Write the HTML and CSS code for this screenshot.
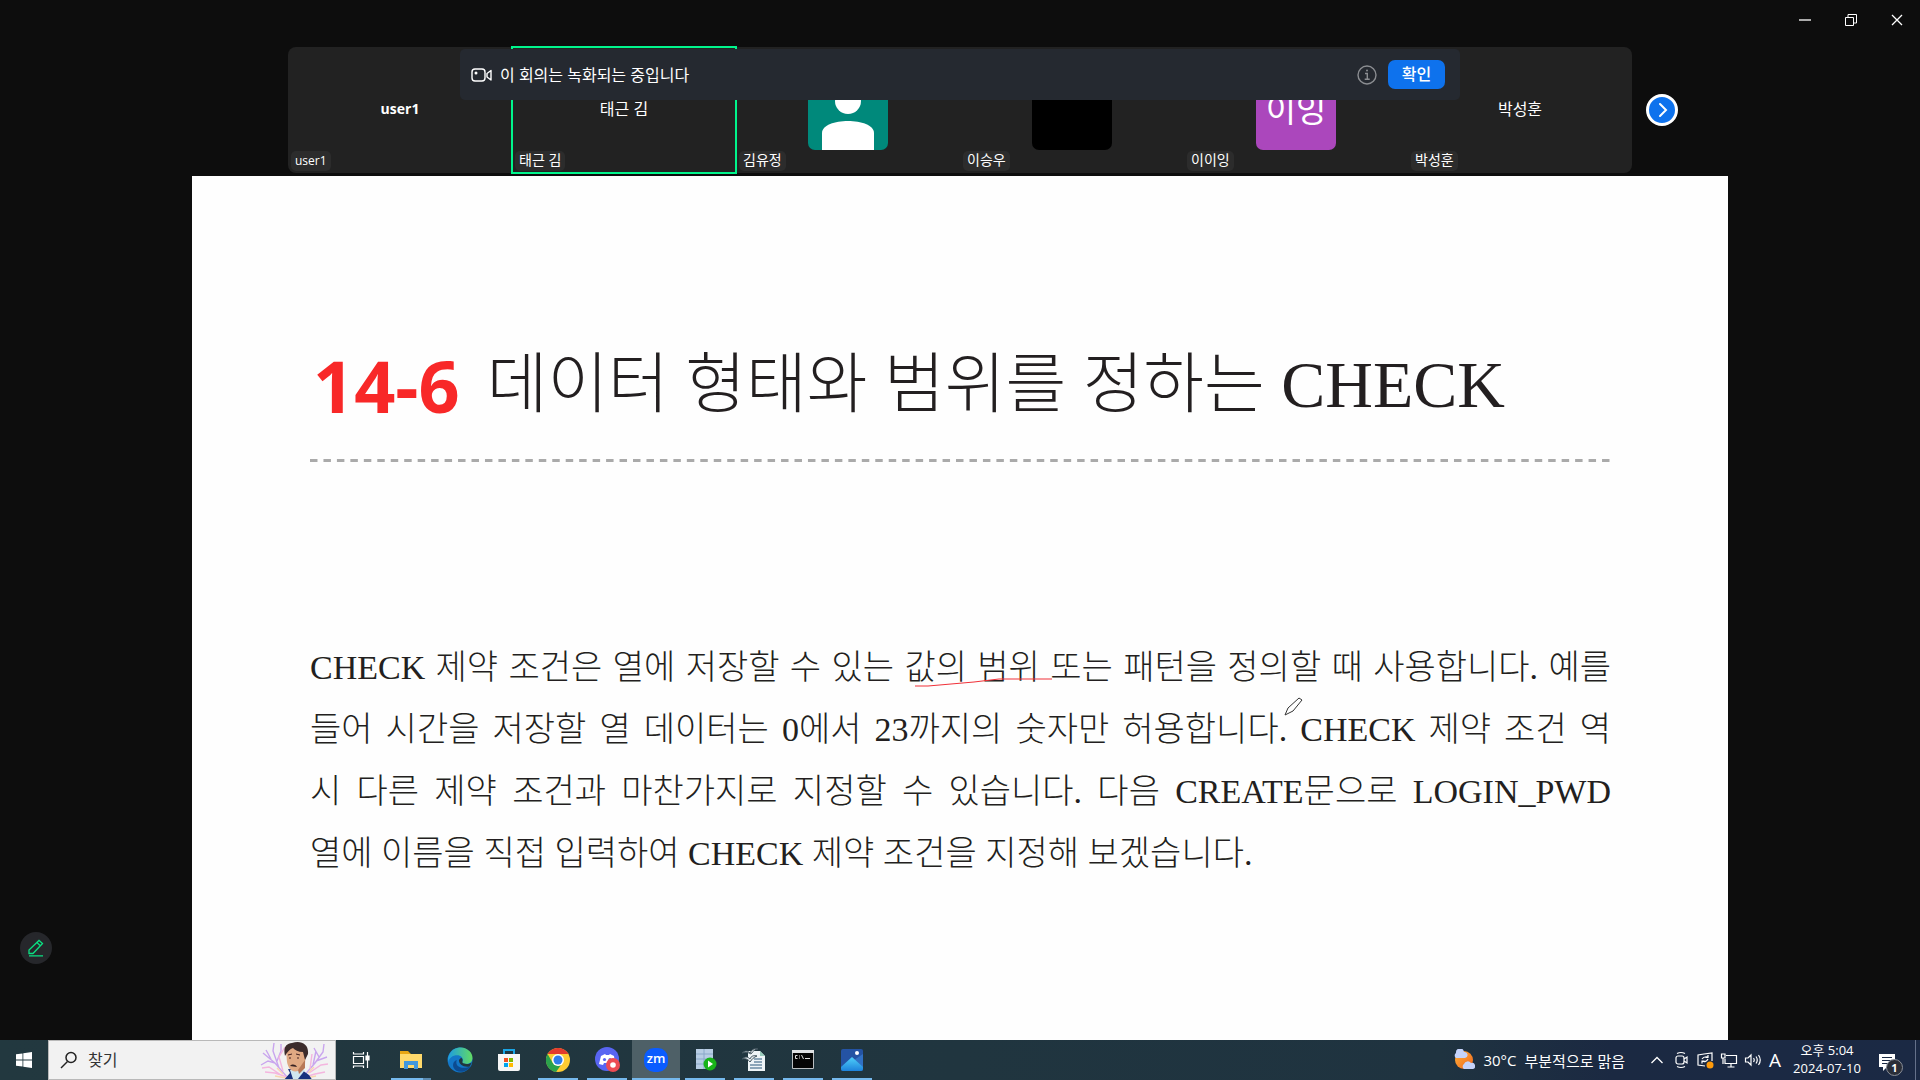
FILE: index.html
```html
<!DOCTYPE html>
<html lang="ko">
<head>
<meta charset="utf-8">
<title>회의</title>
<link rel="stylesheet" href="styles.css">
</head>
<body>
<main class="meeting">
  <header class="titlebar">
    <button class="win-btn" aria-label="최소화"><svg width="14" height="14"><path d="M1 7h12" stroke="#aaa" stroke-width="2"/></svg></button>
    <button class="win-btn" aria-label="이전 크기로"><svg width="14" height="14" fill="none" stroke="#fff"><path d="M1.500 4.500h8v8h-8zM4 4V1.500h8.500V10H10"/></svg></button>
    <button class="win-btn" aria-label="닫기"><svg width="14" height="14"><path d="M2 2l10 10M12 2L2 12" stroke="#fff" stroke-width="1.300"/></svg></button>
  </header>

  <section class="gallery">
    <ul class="tiles">
      <li class="tile"><span class="name latin">user1</span><span class="chip small">user1</span></li>
      <li class="tile speaking"><span class="name">태근 김</span><span class="chip">태근 김</span></li>
      <li class="tile">
        <svg class="avatar" viewBox="0 0 80 80"><rect width="80" height="80" fill="#00897b"/><circle cx="40" cy="31" r="13" fill="#fff"/><path d="M14 80V63C14 55 27 51 40 51s26 4 26 12v17z" fill="#fff"/></svg>
        <span class="chip">김유정</span>
      </li>
      <li class="tile"><span class="avatar black"></span><span class="chip">이승우</span></li>
      <li class="tile"><span class="avatar purple">이잉</span><span class="chip">이이잉</span></li>
      <li class="tile"><span class="name">박성훈</span><span class="chip">박성훈</span></li>
    </ul>
    <button class="next" aria-label="다음"><svg width="26" height="26"><path d="M11 7l6 6-6 6" fill="none" stroke="#fff" stroke-width="2" stroke-linecap="round"/></svg></button>
    <div class="banner">
      <svg width="22" height="16" fill="none" stroke="#fff" stroke-width="1.400"><rect x="1" y="2" width="13" height="12" rx="3"/><path d="M16 6.500l4-3v9.500l-4-3z" stroke-linejoin="round"/><circle cx="5" cy="6" r="1.500" fill="#fff" stroke="none"/></svg>
      <p>이 회의는 녹화되는 중입니다</p>
      <svg class="info" width="20" height="20" fill="none" stroke="#8b8d91" stroke-width="1.400"><circle cx="10" cy="10" r="9"/><path d="M8 8.500h2.300V14M7.700 14.300h5"/><circle cx="10" cy="5.500" r="1" fill="#8b8d91" stroke="none"/></svg>
      <button class="confirm">확인</button>
    </div>
  </section>

  <article class="slide">
    <h1><span class="num">14-6</span><span>데이터 형태와 범위를 정하는 CHECK</span></h1>
    <svg class="rule" viewBox="0 0 1302 3" preserveAspectRatio="none"><path d="M0 1.500H1302" pathLength="2610" stroke="#aaa" stroke-width="3" stroke-dasharray="15 12"/></svg>
    <p class="body">
      <span>CHECK 제약 조건은 열에 저장할 수 있는 값의 범위 또는 패턴을 정의할 때 사용합니다. 예를</span>
      <span>들어 시간을 저장할 열 데이터는 0에서 23까지의 숫자만 허용합니다. CHECK 제약 조건 역</span>
      <span>시 다른 제약 조건과 마찬가지로 지정할 수 있습니다. 다음 CREATE문으로 LOGIN_PWD</span>
      <span>열에 이름을 직접 입력하여 CHECK 제약 조건을 지정해 보겠습니다.</span>
    </p>
    <svg class="ink" viewBox="0 0 1536 864" fill="none">
      <path d="M723 510h13l46-4 25-3h53" stroke="#f03038"/>
      <path d="M1093 539l3-7 11-10 3 2-9 11z" fill="#fff" stroke="#333"/>
    </svg>
  </article>

  <button class="annotate" aria-label="주석"><svg width="18" height="18" fill="none" stroke="#0be082" stroke-width="1.300"><path d="M2 14.500v-3.500L12 1.500l3.500 3L6 14.500zM10 3.500l3.500 3.500M2 16.800h14"/></svg></button>
</main>

<footer class="taskbar">
  <button class="start" aria-label="시작"><svg width="16" height="16" fill="#fff"><path d="M0 2.300l6.500-.9v6.200H0zM7.300 1.300L16 0v7.600H7.300zM0 8.400h6.500v6.200L0 13.700zM7.300 8.400H16V16l-8.700-1.200z"/></svg></button>
  <label class="search">
    <svg width="18" height="18" fill="none" stroke="#222" stroke-width="1.500"><circle cx="11" cy="6.500" r="5"/><path d="M7.500 10.500L1 17"/></svg>
    <input type="text" placeholder="찾기" aria-label="찾기">
    <svg class="tesla" width="72" height="38" viewBox="0 0 72 38" fill="none">
      <g stroke-width="1.400"><path stroke="#c9a5ee" d="M28 36L16 22 4 12M20 27L14 10 15 2M16 22L9 20 2 24M18 20l4-10V3M12 18L7 9M44 36l12-14 8-11 1-8M54 24l3-14M57 20l11-4M60 16l-5-9"/><path stroke="#f4b6df" d="M28 36l-12-4-10-1M22 34L10 26 3 27M24 30L20 16l6-10M46 36l10-3 10-2M50 32l12-8 7-1M51 28l2-15"/><path stroke="#f8d6b0" d="M27 37L16 35M24 33l-6-6M47 37l10-2M49 32l6-6"/></g>
      <path d="M29 28l2 4-7 8h30l-4-6-7-5z" fill="#17307d"/><path d="M31 29l3 9h5l7-9z" fill="#cfe6ee"/>
      <path d="M27 9c0-5 19-6 20 1l-1 13-7 7c-6 2-10-3-11-9z" fill="#e0a983"/><path d="M39 29l7-10v8l-6 6z" fill="#b77858"/>
      <path d="M26 15c-2-9 1-12 7-13 9-3 17 1 16 11l-3 6-2-8c-5 0-8-2-10-4-3 1-6 4-8 8z" fill="#3b2b2b"/>
      <path d="M31 25c2-2 5-2 7 1z" fill="#372323"/><path d="M29 14l4-1M37 13l4 1" stroke="#422"/><path d="M30 17h2M38 17h2" stroke="#422"/>
    </svg>
  </label>
  <nav class="apps">
    <button class="task-view" aria-label="작업 보기"><svg width="18" height="18" fill="none" stroke="#fff" stroke-width="1.200"><path d="M1.500 1v2h10V1M1.500 5.500h10v7h-10zM1.500 17v-2h10v2M15.500 1v16"/><path d="M14 5h3v4h-3z" fill="#fff"/></svg></button>
    <button class="open explorer" aria-label="파일 탐색기"><svg width="24" height="24"><path d="M1 3h8l3 3h11v14H1z" fill="#e8a614"/><path d="M1 6h22v14H1z" fill="#ffd96b"/><path d="M5 21v-8h14v8h-4v-4H9v4z" fill="#4298dc"/></svg></button>
    <button aria-label="Edge"><svg width="26" height="26" viewBox="0 0 24 24"><defs><linearGradient id="e1" x1="0" x2="1"><stop stop-color="#1d9de0"/><stop offset="1" stop-color="#62db64"/></linearGradient></defs><circle cx="12" cy="12" r="11.500" fill="#1377c8"/><path d="M1 10C3 2 9 .4 13 .5c6 .3 11 5 10.500 10-.3 4-4 5.500-8 5-2-.3-2-1-1-2.500 1-3-2-5.500-5-5.500C5 7.500 2 10 1 14z" fill="url(#e1)"/><path d="M9 12c-2 6 4 9 13 6l-2 2c-4 4-12 4-14-1-1-3 0-6 3-7z" fill="#0c4b91"/><path d="M13 10c3 2 0 4 2 5 3 1 6 1 8-1l-2 4c-6 1-10-2-10-6z" fill="#21353e"/></svg></button>
    <button aria-label="Store"><svg width="24" height="24"><path d="M7 7V2h10v5" fill="none" stroke="#1aa5e5" stroke-width="2"/><path d="M1 6h22v15q0 2-2 2H3q-2 0-2-2z" fill="#f6f6f6"/><path d="M7 10h4v4H7z" fill="#f25022"/><path d="M12 10h4v4h-4z" fill="#7fba00"/><path d="M7 15h4v4H7z" fill="#00a4ef"/><path d="M12 15h4v4h-4z" fill="#ffb900"/></svg></button>
    <button class="open" aria-label="Chrome"><svg width="24" height="24"><circle cx="12" cy="12" r="12" fill="#fc3"/><path d="M1.600 6A12 12 0 0 1 22.400 6H12z" fill="#e33b2e"/><path d="M1.600 6l5.200 9 5.200 3 3-1-5 7A12 12 0 0 1 1.600 6" fill="#2ba24c"/><circle cx="12" cy="12" r="6" fill="#fff"/><circle cx="12" cy="12" r="4.500" fill="#2f7de9"/></svg></button>
    <button class="open" aria-label="Discord"><svg width="26" height="26" viewBox="-1 0 26 26"><circle cx="12" cy="12" r="12" fill="#5865f2"/><path d="M4 17l2-8 4-2 1 1h3l1-1 4 2 1 8-4 1-1-2H9l-1 2z" fill="#fff"/><circle cx="9.500" cy="12.500" r="1.600" fill="#5865f2"/><circle cx="15" cy="12.500" r="1.600" fill="#5865f2"/><circle cx="18" cy="18" r="7" fill="#ed4b53"/><circle cx="18" cy="18" r="2.800" fill="#fff"/></svg></button>
    <button class="open active" aria-label="Zoom"><span class="zm">zm</span></button>
    <button class="open" aria-label="SQL"><svg width="24" height="24"><path d="M3 1h17v20H3z" fill="#b8cde4"/><path d="M3 6h17M3 11h17M3 16h17M11 1v20" stroke="#8aa8c8"/><circle cx="17" cy="16" r="6.500" fill="#19b319"/><path d="M15 12.500v7l5-3.500z" fill="#fff"/></svg></button>
    <button class="open" aria-label="OpenOffice"><svg width="26" height="24"><path d="M7 3h12l5 5v15H7z" fill="#eef4f7"/><path d="M19 3v5h5z" fill="#9cb"/><path d="M13 11h8M13 14h8M9 17h12M9 20h12" stroke="#29577a"/><path d="M1 5c4-3 6-2 8 0 2-4 5-5 8-4-3 0-5 2-7 5-3-2-6-2-9-1zM1 11c4-3 6-2 8 0 1-3 4-4 7-3-3 1-5 3-7 6-2-3-5-4-8-3z" fill="#e8eef2" stroke="#40525c"/></svg></button>
    <button class="open" aria-label="명령 프롬프트"><svg width="24" height="24"><path d="M1.500 2.500h21v18h-21z" fill="#050505" stroke="#b9bec1"/><path d="M1 2h22v3H1z" fill="#dfe2e4"/><path d="M6.500 7.500h-2v3h2M8.500 7.500v1M8.500 9.500v1M10.500 7l2 4M14 10.500h5" fill="none" stroke="#ddd"/></svg></button>
    <button class="open" aria-label="사진"><svg width="24" height="24"><defs><linearGradient id="ph" y1="0" y2="1" x2="0"><stop stop-color="#4fd0fa"/><stop offset="1" stop-color="#1e82db"/></linearGradient></defs><rect x="1" y="1" width="22" height="22" rx="2" fill="#2453a4"/><path d="M14 12l9-6v14z" fill="#3070c4"/><path d="M1 19L12 9l11 10v2q0 2-2 2H3q-2 0-2-2z" fill="url(#ph)"/><circle cx="17" cy="5" r="2" fill="#fff"/></svg></button>
  </nav>

  <div class="tray">
    <button class="weather"><svg width="22" height="22"><defs><linearGradient id="sun" x2="1" y2="1"><stop stop-color="#ffb23a"/><stop offset="1" stop-color="#f0641c"/></linearGradient></defs><circle cx="11" cy="11" r="9" fill="url(#sun)"/><path d="M3 9a3 3 0 0 1 0-5 4 4 0 0 1 8-1 3 3 0 0 1 1 6zM11 20a3 3 0 0 1 0-5 4 4 0 0 1 7-1 3 3 0 0 1 2 6z" fill="#c5d3fb"/></svg><span>30°C</span><span>부분적으로 맑음</span></button>
    <div class="icons">
      <svg width="18" height="18" fill="none" stroke="#fff" stroke-width="1.300"><path d="M3.500 12L9 6.500l5.500 5.500"/></svg>
      <svg width="18" height="18" fill="none" stroke="#fff" stroke-width="1.200"><rect x="4" y="5" width="8" height="8" rx="2"/><path d="M12 8l3-2v6l-3-2M5 2.500q4-2 8 0M5 15.500q4 2 8 0"/></svg>
      <svg width="18" height="18" fill="none" stroke="#fff" stroke-width="1.200"><path d="M9 15l-7-1V4l6-1 8-1v8M6 8q2-3 6-2M12 4v2.500H9.500M12 8q-2 4-6 2M6 12.500V10h2.500"/><circle cx="14" cy="14" r="3.500" fill="#ff9a0a" stroke="none"/></svg>
      <svg width="18" height="18" fill="none" stroke="#fff" stroke-width="1.200"><path d="M6 4.500h10.500v8H5V8M11 12.500V16M7.500 16h7M1.500 3h3.500v4H1.500zM3 7v6"/></svg>
      <svg width="18" height="18" fill="none" stroke="#fff" stroke-width="1.200"><path d="M1.500 7v4H4l3 3V4L4 7zM9.500 7q1.500 2 0 4M12 5.500q2.500 3.500 0 7M14.500 4q3.500 5 0 10"/></svg>
    </div>
    <span class="ime">A</span>
    <time class="clock"><span>오후 5:04</span><span>2024-07-10</span></time>
    <button class="notice" aria-label="알림"><svg width="26" height="26"><path d="M1 2h16v13H9l-4 4v-4H1z" fill="#fff"/><path d="M4 5.500h10M4 8.500h10M4 11.500h7" stroke="#1c2a44"/></svg><span class="count">1</span></button>
  </div>
</footer>
</body>
</html>
```
FILE: styles.css
```css
* { box-sizing: border-box; }
body {
  margin: 0;
  min-height: 100vh;
  display: flex;
  flex-direction: column;
  background: #0d0d0d;
  color: #fff;
  font-family: "Open Sans", "Noto Sans CJK KR", sans-serif;
  font-size: 16px;
}
button { border: 0; padding: 0; margin: 0; background: none; color: inherit; font: inherit; }
svg { display: block; flex: none; }
p, h1, ul { margin: 0; padding: 0; }

.meeting { flex: 1; display: flex; flex-direction: column; position: relative; }
.titlebar { display: flex; justify-content: flex-end; height: 40px; }
.win-btn { width: 46px; display: grid; place-items: center; }

.gallery {
  position: relative;
  display: grid;
  grid-template-columns: 1fr 70% 1fr;
  align-items: center;
  padding: 7px 0 3px;
}
.tiles {
  grid-column: 2;
  display: grid;
  grid-template-columns: repeat(6, 1fr);
  height: 126px;
  list-style: none;
  background: #222;
  border-radius: 8px;
}
.tile { position: relative; display: grid; place-items: center; }
.speaking { outline: 2px solid #00f58c; outline-offset: -1px; }
.name { line-height: 24px; padding-bottom: 2px; }
.latin { font-size: 14px; font-weight: 700; }
.chip {
  position: absolute;
  left: 3px;
  bottom: 2px;
  padding: 0 4px 2px;
  border-radius: 5px;
  background: #2c2c2c;
  font-size: 14px;
  line-height: 18px;
}
.small { padding: 0 4px; font-size: 12px; line-height: 20px; }
.avatar { width: 80px; height: 80px; border-radius: 7px; overflow: hidden; }
.black { background: #000; }
.purple { background: #ab47bc; font-size: 33px; line-height: 80px; text-align: center; }
.next {
  width: 32px;
  height: 32px;
  margin-left: 14px;
  border: 3px solid #fff;
  border-radius: 50%;
  background: #0e72ed;
}
.banner {
  position: absolute;
  top: 9px;
  left: 50%;
  transform: translateX(-50%);
  width: 1000px;
  height: 51px;
  display: flex;
  align-items: center;
  gap: 7px;
  padding: 0 15px 0 11px;
  border-radius: 5px;
  background: #252930;
}
.banner p { padding-bottom: 2px; }
.info { margin-left: auto; }
.confirm {
  width: 57px;
  height: 29px;
  margin-left: 4px;
  border-radius: 7px;
  background: #0e72ed;
  font-weight: 500;
  line-height: 29px;
}

.slide {
  position: relative;
  flex: 1;
  margin: 0 10%;
  padding: 161px 117px 0 118px;
  background: #fefefe;
  color: #231f20;
  font-family: "Liberation Serif", "Noto Sans CJK KR", serif;
}
.slide h1 {
  display: flex;
  align-items: center;
  gap: 27px;
  padding-left: 3px;
  font-size: 66px;
  font-weight: 300;
  line-height: 96px;
  white-space: nowrap;
}
.num {
  color: #f82828;
  font-family: "Open Sans", sans-serif;
  font-size: 72px;
  font-weight: 700;
}
.rule { width: 100%; height: 3px; margin-top: 26px; }
.body { margin-top: 175px; font-size: 34px; font-weight: 300; line-height: 62px; }
.body span { display: block; text-align-last: justify; white-space: nowrap; }
.body span:last-child { text-align-last: left; }
.ink { position: absolute; top: 0; left: 0; width: 100%; }

.annotate {
  position: absolute;
  left: 20px;
  bottom: 76px;
  width: 32px;
  height: 32px;
  display: grid;
  place-items: center;
  border-radius: 50%;
  background: #26272b;
}

.taskbar {
  display: flex;
  height: 40px;
  background: linear-gradient(90deg, #22383f 0%, #20353f 50%, #1f3340 75%, #1b2942 84%, #1b2944 100%);
  font-size: 15px;
}
.start { width: 48px; display: grid; place-items: center; }
.search {
  width: 288px;
  display: flex;
  align-items: center;
  gap: 10px;
  padding-left: 11px;
  border: 1px solid #b9b9b9;
  background: #f2f2f2;
}
.search input {
  flex: 1;
  min-width: 0;
  padding: 0;
  border: 0;
  outline: 0;
  background: none;
  font: inherit;
  font-size: 16px;
}
.search input::placeholder { color: #333; opacity: 1; }
.tesla { margin-right: 4px; }
.apps { display: flex; gap: 1px; }
.apps button { position: relative; width: 48px; display: grid; place-items: center; }
.apps .task-view { width: 50px; padding-right: 1px; }
.open::after {
  content: "";
  position: absolute;
  left: 4px;
  right: 4px;
  bottom: 0;
  height: 2px;
  background: #76b9ed;
}
.explorer::after { background: linear-gradient(90deg, #76b9ed 80%, #5b8bb0 80%); }
.active { background: #4e6067; }
.active::after { left: 0; right: 0; }
.zm {
  width: 24px;
  height: 24px;
  border-radius: 10px;
  background: #0b5cff;
  font-size: 13px;
  font-weight: 600;
  line-height: 21px;
}

.tray { margin-left: auto; display: flex; align-items: center; }
.weather { display: flex; align-items: center; gap: 8px; margin-right: 23px; }
.icons { display: flex; gap: 6px; }
.ime { width: 26px; font-size: 19px; text-align: center; }
.clock {
  display: flex;
  flex-direction: column;
  width: 78px;
  padding-bottom: 2px;
  font-size: 13px;
  line-height: 18px;
  text-align: center;
}
.notice { position: relative; width: 50px; height: 40px; padding: 9px 0 0 12px; margin-right: 4px; border-right: 1px solid #65718a; }
.count {
  position: absolute;
  left: 20px;
  top: 19px;
  width: 17px;
  height: 17px;
  border: 1px solid #8a8f98;
  border-radius: 50%;
  background: #2a2e38;
  font-size: 11px;
  font-weight: 700;
  line-height: 15px;
}
```
